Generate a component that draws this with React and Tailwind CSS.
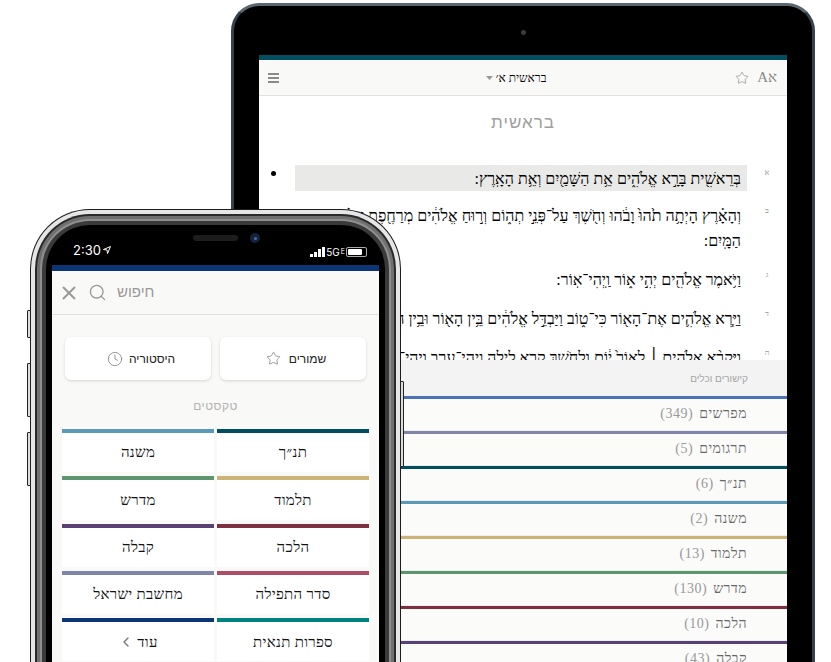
import React from "react";
import { Star, Clock, Search, ChevronLeft } from "lucide-react";

const SERIF = "font-['Liberation_Serif',serif]";

const verses = [
  ["א", "בְּרֵאשִׁ֖ית בָּרָ֣א אֱלֹהִ֑ים אֵ֥ת הַשָּׁמַ֖יִם וְאֵ֥ת הָאָֽרֶץ:"],
  ["ב", "וְהָאָ֗רֶץ הָיְתָ֥ה תֹ֙הוּ֙ וָבֹ֔הוּ וְחֹ֖שֶׁךְ עַל־פְּנֵ֣י תְה֑וֹם וְר֣וּחַ אֱלֹהִ֔ים מְרַחֶ֖פֶת עַל־פְּנֵ֥י הַמָּֽיִם:"],
  ["ג", "וַיֹּ֥אמֶר אֱלֹהִ֖ים יְהִ֣י א֑וֹר וַֽיְהִי־אֽוֹר:"],
  ["ד", "וַיַּ֧רְא אֱלֹהִ֛ים אֶת־הָא֖וֹר כִּי־ט֑וֹב וַיַּבְדֵּ֣ל אֱלֹהִ֔ים בֵּ֥ין הָא֖וֹר וּבֵ֥ין הַחֹֽשֶׁךְ:"],
  ["ה", "וַיִּקְרָ֨א אֱלֹהִ֤ים ׀ לָאוֹר֙ י֔וֹם וְלַחֹ֖שֶׁךְ קָ֣רָא לָ֑יְלָה וַֽיְהִי־עֶ֥רֶב וַֽיְהִי־בֹ֖קֶר"],
];

const links = [
  ["מפרשים", "(349)", "border-t-[#4b71b7]"],
  ["תרגומים", "(5)", "border-t-[#7f85a9]"],
  ["תנ״ך", "(6)", "border-t-[#004e5f]"],
  ["משנה", "(2)", "border-t-[#5a99b7]"],
  ["תלמוד", "(13)", "border-t-[#ccb479]"],
  ["מדרש", "(130)", "border-t-[#5d956f]"],
  ["הלכה", "(10)", "border-t-[#802f3e]"],
  ["קבלה", "(43)", "border-t-[#594176]"],
];

const cats = [
  ["תנ״ך", "border-t-[#004e5f]"],
  ["משנה", "border-t-[#5a99b7]"],
  ["תלמוד", "border-t-[#ccb479]"],
  ["מדרש", "border-t-[#5d956f]"],
  ["הלכה", "border-t-[#802f3e]"],
  ["קבלה", "border-t-[#594176]"],
  ["סדר התפילה", "border-t-[#ab4e66]"],
  ["מחשבת ישראל", "border-t-[#7f85a9]"],
  ["ספרות תנאית", "border-t-[#00827f]"],
  ["עוד", "border-t-[#0c3575]"],
];

function Tablet() {
  return (
    <div className="absolute left-[231px] top-[3px] w-[584px] h-[760px] rounded-[28px] border-[3px] border-[#36424b] border-t-[#5b6770] bg-black pt-[49px] pl-[25px] pr-[25px]">
      <div className="absolute left-[287px] top-[24px] w-[5px] h-[5px] rounded-full bg-[#3a3a3a]" />
      <div className="w-[528px] h-[700px] flex flex-col bg-white">
        <div className="h-[5px] bg-[#004e5f] shrink-0" />
        <div className="h-[36px] shrink-0 flex items-center justify-between bg-[#f9f9f7] border-b border-[#e2e2e0] pl-[9px] pr-[10px]">
          <div className="flex flex-col gap-[2px] w-[11px]">
            <div className="h-[2px] bg-[#8a8a8a]" />
            <div className="h-[2px] bg-[#8a8a8a]" />
            <div className="h-[2px] bg-[#8a8a8a]" />
          </div>
          <div className="flex items-center gap-[3px] ml-[18px]">
            <svg width="7" height="4" viewBox="0 0 7 4"><path d="M0 0h7L3.500 4z" fill="#999" /></svg>
            <span dir="rtl" className={`${SERIF} text-[12px] text-black`}>בראשית א׳</span>
          </div>
          <div className="flex items-center gap-[8px]">
            <Star size={14} strokeWidth={1} className="text-[#777]" />
            <span className={`${SERIF} text-[15px] leading-none text-[#888]`}>Aא</span>
          </div>
        </div>
        <div dir="rtl" className="h-[264px] shrink-0 overflow-hidden">
          <div className="h-[54px] flex items-center justify-center font-['Liberation_Sans',sans-serif] text-[17px] tracking-[1px] text-[#a0a0a0]">בראשית</div>
          <div className="mt-[15px]">
            {verses.map(([n, t], i) => (
              <div key={n} className={`flex items-start ${i === 0 ? "mb-[12px]" : "mb-[14px]"}`}>
                <div className={`${SERIF} w-[40px] shrink-0 text-center text-[8px] leading-[16px] text-[#999]`}>{n}</div>
                <div className={`w-[452px] shrink-0 pr-[6px] ${SERIF} text-[16px] leading-[25px] text-black ${i === 0 ? "bg-[#e9e9e7] pt-px" : ""}`}>{t}</div>
                {i === 0 && <div className="mr-[19px] mt-[6px] w-[5px] h-[5px] rounded-full bg-black shrink-0" />}
              </div>
            ))}
          </div>
        </div>
        <div dir="rtl" className="flex-1 bg-[#fbfbfa]">
          <div className="h-[36px] flex items-center bg-[#f3f3f3] pr-[39px] font-['Liberation_Sans',sans-serif] text-[10px] text-[#a5a5a5]">קישורים וכלים</div>
          {links.map(([a, b, c]) => (
            <div key={a} className={`h-[35px] pb-[2px] flex items-center gap-[6px] border-t-[3px] ${c} border-b border-b-[#ededed] pr-[40px] ${SERIF} text-[14px] tracking-[0.5px] text-[#666]`}>
              <span>{a}</span>
              <span className="text-[#999]">{b}</span>
            </div>
          ))}
        </div>
      </div>
    </div>
  );
}

function SideButton({ cls }) {
  return <div className={`absolute w-[4px] rounded-[1px] border border-[#222] bg-[#ddd] ${cls}`} />;
}

function Phone() {
  return (
    <div className="absolute left-[30px] top-[209px] w-[371px] h-[520px]">
      <SideButton cls="left-[-3px] top-[101px] h-[28px]" />
      <SideButton cls="left-[-3px] top-[154px] h-[54px]" />
      <SideButton cls="left-[-3px] top-[223px] h-[54px]" />
      <SideButton cls="right-[-3px] top-[172px] h-[86px]" />
      <div className="h-full rounded-[60px] bg-[#1c1c1c] p-px">
        <div className="h-full rounded-[59px] bg-[#e6e6e6] p-[4px]">
          <div className="h-full rounded-[55px] bg-[#2a2a2a] p-[2px]">
            <div className="h-full rounded-[53px] bg-[#707070] p-[3px]">
              <div className="h-full rounded-[50px] bg-[#8f8f8f] p-[2px]">
                <div className="h-full rounded-[48px] bg-[#3a3a3a] p-[4px]">
                  <div className="h-full rounded-[44px] bg-black px-[6px] overflow-hidden flex flex-col">
                    <div className="h-[40px] shrink-0 relative flex items-end justify-between pb-[7px] pl-[21px] pr-[12px] text-white font-['Inter',sans-serif]">
                      <div className="flex items-center gap-[2px] text-[13px] leading-[16px]">
                        <span>2:30</span>
                        <svg width="8" height="8" viewBox="0 0 8 8" fill="none" stroke="#fff" strokeWidth="1"><path d="M7.500.5 .5 3.500l3.500.5.5 3.500z" /></svg>
                      </div>
                      <div className="absolute left-[141px] top-[10px] w-[45px] h-[6px] rounded-full bg-[#1d1d1d]" />
                      <div className="absolute left-[198px] top-[8px] w-[10px] h-[10px] rounded-full bg-[#15233a] flex items-center justify-center">
                        <div className="w-[3px] h-[3px] rounded-full bg-[#3b6fb0]" />
                      </div>
                      <div className="flex items-center gap-px">
                        <div className="flex items-end gap-px h-[10px]">
                          <div className="w-[3px] h-[3px] bg-white" />
                          <div className="w-[3px] h-[5px] bg-white" />
                          <div className="w-[3px] h-[8px] bg-white" />
                          <div className="w-[3px] h-[10px] bg-white" />
                        </div>
                        <span className="text-[10px] leading-[12px]">5G</span>
                        <span className="text-[7px] leading-[12px]">E</span>
                        <div className="w-[21px] h-[10px] rounded-[2px] border border-[#aaa] p-px">
                          <div className="w-[14px] h-full bg-white rounded-[1px]" />
                        </div>
                      </div>
                    </div>
                    <div className="flex-1 bg-[#f9f9f7] flex flex-col">
                      <div className="h-[6px] bg-[#0c3575] shrink-0" />
                      <div className="h-[44px] shrink-0 flex items-center border-b border-[#e0e0de] pl-[10px] text-[#999]">
                        <svg width="14" height="14" viewBox="0 0 14 14" fill="none" stroke="currentColor" strokeWidth="2"><path d="M1 1l12 12M13 1 1 13" /></svg>
                        <Search size={19} strokeWidth={1.7} className="ml-[12px]" />
                        <span dir="rtl" className="ml-[10px] font-['Liberation_Sans',sans-serif] text-[15px] text-[#999]">חיפוש</span>
                      </div>
                      <div dir="rtl" className="mt-[22px] flex gap-[9px] pr-[13px] pl-[13px]">
                        <div className="w-[146px] h-[43px] pl-[6px] rounded-[6px] bg-white shadow-[0_1px_3px_rgba(0,0,0,0.15)] flex items-center justify-center gap-[8px] font-['Liberation_Sans',sans-serif] text-[12px] text-[#222]">
                          <span>שמורים</span>
                          <Star size={15} strokeWidth={1} className="text-[#666]" />
                        </div>
                        <div className="w-[146px] h-[43px] pl-[6px] rounded-[6px] bg-white shadow-[0_1px_3px_rgba(0,0,0,0.15)] flex items-center justify-center gap-[6px] font-['Liberation_Sans',sans-serif] text-[12px] text-[#222]">
                          <span>היסטוריה</span>
                          <Clock size={16} strokeWidth={1} className="text-[#666]" />
                        </div>
                      </div>
                      <div dir="rtl" className="mt-[18px] h-[16px] flex items-center justify-center font-['Liberation_Sans',sans-serif] text-[12px] tracking-[0.5px] text-[#b2b2b2]">טקסטים</div>
                      <div dir="rtl" className="mt-[15px] mx-[10px] grid grid-cols-2 gap-x-[3px] gap-y-[4px]">
                        {cats.map(([t, c]) => (
                          <div key={t} className={`h-[43.300px] bg-white border-t-[4px] ${c} flex items-center justify-center gap-[3px] ${SERIF} text-[15px] tracking-[0.3px] text-[#111]`}>
                            <span>{t}</span>
                            {t === "עוד" && <ChevronLeft size={16} strokeWidth={2} className="text-[#777]" />}
                          </div>
                        ))}
                      </div>
                    </div>
                  </div>
                </div>
              </div>
            </div>
          </div>
        </div>
      </div>
    </div>
  );
}

export default function App() {
  return (
    <div className="relative w-[831px] h-[662px] overflow-hidden bg-white">
      <Tablet />
      <Phone />
    </div>
  );
}
